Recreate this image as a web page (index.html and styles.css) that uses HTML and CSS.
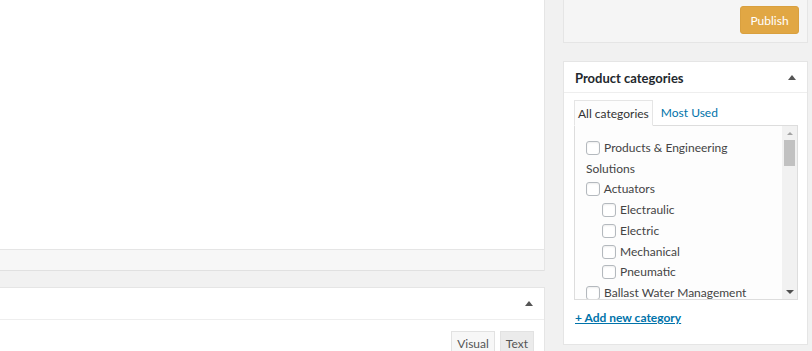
FILE: index.html
```html
<!DOCTYPE html>
<html lang="en">
<head>
    <meta charset="UTF-8">
    <meta name="viewport" content="width=device-width, initial-scale=1.0">
    <title>Edit Product</title>
    <link rel="stylesheet" href="styles.css">
</head>
<body>
    <div class="page">
        <div class="main-col">
            <div class="editor">
                <div class="editor-area"></div>
                <div class="status-bar"></div>
            </div>

            <div class="postbox wide-box">
                <div class="postbox-head">
                    <span class="toggle-arrow"></span>
                </div>
                <div class="editor-tabs">
                    <button class="tab-btn">Visual</button>
                    <button class="tab-btn tab-active">Text</button>
                </div>
            </div>
        </div>

        <aside class="side-col">
            <div class="postbox publish-box">
                <div class="publish-actions">
                    <button class="publish-btn">Publish</button>
                </div>
            </div>

            <div class="postbox cat-box">
                <div class="postbox-head">
                    <h2>Product categories</h2>
                    <span class="toggle-arrow"></span>
                </div>
                <div class="inside">
                    <ul class="cat-tabs">
                        <li class="cat-tab current">All categories</li>
                        <li class="cat-tab"><a href="#">Most Used</a></li>
                    </ul>
                    <div class="tabs-panel">
                        <ul class="checklist">
                            <li><label><input type="checkbox" class="cat-check"> Products &amp; Engineering Solutions</label></li>
                            <li>
                                <label><input type="checkbox" class="cat-check"> Actuators</label>
                                <ul class="children">
                                    <li><label><input type="checkbox" class="cat-check"> Electraulic</label></li>
                                    <li><label><input type="checkbox" class="cat-check"> Electric</label></li>
                                    <li><label><input type="checkbox" class="cat-check"> Mechanical</label></li>
                                    <li><label><input type="checkbox" class="cat-check"> Pneumatic</label></li>
                                </ul>
                            </li>
                            <li><label><input type="checkbox" class="cat-check"> Ballast Water Management</label></li>
                        </ul>
                        <div class="scrollbar">
                            <div class="sb-btn"><span class="sb-up"></span></div>
                            <div class="sb-thumb"></div>
                            <div class="sb-track"></div>
                            <div class="sb-btn"><span class="sb-down"></span></div>
                        </div>
                    </div>
                    <a href="#" class="add-link">+ Add new category</a>
                </div>
            </div>
        </aside>
    </div>
</body>
</html>
```

FILE: styles.css
```css
body {
    font-family: Lato, "Liberation Sans", sans-serif;
    font-size: 12px;
    margin: 0;
    padding: 0;
    background-color: #f1f1f1;
    color: #444;
    overflow: hidden;
}
.page {
    display: grid;
    grid-template-columns: 545px 245px;
    column-gap: 18px;
    height: 351px;
    overflow: hidden;
}
.postbox {
    background-color: #fff;
    border: 1px solid #e5e5e5;
    box-sizing: border-box;
}
.postbox-head {
    display: flex;
    align-items: center;
    justify-content: space-between;
    height: 31px;
    border-bottom: 1px solid #eee;
    box-sizing: content-box;
}
.toggle-arrow {
    width: 0;
    height: 0;
    border-left: 4px solid transparent;
    border-right: 4px solid transparent;
    border-bottom: 5px solid #555;
}

/* left column */
.editor {
    border-right: 1px solid #e5e5e5;
}
.editor-area {
    height: 249px;
    background-color: #fff;
}
.status-bar {
    height: 22px;
    box-sizing: border-box;
    background-color: #f7f7f7;
    border-top: 1px solid #e5e5e5;
    border-bottom: 1px solid #e0e0e0;
}
.wide-box {
    margin-top: 16px;
    border-left: none;
    height: 80px;
}
.wide-box .postbox-head {
    justify-content: flex-end;
    padding-right: 11px;
}
.editor-tabs {
    display: flex;
    justify-content: flex-end;
    gap: 5px;
    padding: 11px 10px 0 0;
}
.tab-btn {
    font-family: inherit;
    font-size: 12px;
    color: #555;
    height: 24px;
    padding: 0 5px;
    background-color: #f7f7f7;
    border: 1px solid #e2e2e2;
    border-bottom: none;
    cursor: pointer;
}
.tab-active {
    background-color: #ebebeb;
}

/* right column */
.publish-box {
    border-top: none;
}
.publish-actions {
    display: flex;
    justify-content: flex-end;
    padding: 6px 8px 8px;
    background-color: #f5f5f5;
}
.publish-btn {
    font-family: inherit;
    font-size: 12px;
    color: #fff;
    height: 28px;
    width: 59px;
    background-color: #e1a744;
    border: 1px solid #d9a03f;
    border-radius: 3px;
    cursor: pointer;
}
.cat-box {
    margin-top: 18px;
    height: 284px;
}
.cat-box .postbox-head {
    height: 30px;
    padding: 0 11px 0 11px;
}
.cat-box h2 {
    margin: 2px 0 0;
    font-size: 13px;
    font-weight: 700;
    color: #23282d;
}
.inside {
    padding: 7px 9px 0 10px;
}
.cat-tabs {
    display: flex;
    list-style: none;
    margin: 0 0 -1px;
    padding: 0;
    position: relative;
}
.cat-tab {
    height: 24px;
    line-height: 25px;
    padding: 0 8px;
}
.cat-tab.current {
    padding: 0 3px;
    background-color: #fdfdfd;
    border: 1px solid #e5e5e5;
    border-bottom: 1px solid #fdfdfd;
    color: #333;
}
.cat-tab a {
    color: #0073aa;
    text-decoration: none;
}
.tabs-panel {
    display: flex;
    height: 175px;
    box-sizing: border-box;
    border: 1px solid #ddd;
    background-color: #fdfdfd;
}
.checklist {
    flex: 1;
    list-style: none;
    margin: 0;
    padding: 12px 12px 0 11px;
    overflow: hidden;
    line-height: 20.7px;
}
.checklist ul {
    list-style: none;
    margin: 0;
    padding: 0;
}
.checklist .children {
    padding-left: 16px;
}
.cat-check {
    appearance: none;
    width: 14px;
    height: 14px;
    margin: 0 1px 0 0;
    vertical-align: -3px;
    background-color: #fff;
    border: 1px solid #b4b9be;
    border-radius: 3px;
    box-shadow: inset 0 1px 2px rgba(0, 0, 0, 0.07);
}
.scrollbar {
    width: 15px;
    display: flex;
    flex-direction: column;
    background-color: #f1f1f1;
}
.sb-btn {
    height: 14px;
    display: flex;
    align-items: center;
    justify-content: center;
}
.sb-up {
    border-left: 3px solid transparent;
    border-right: 3px solid transparent;
    border-bottom: 3px solid #a3a3a3;
}
.sb-down {
    border-left: 4px solid transparent;
    border-right: 4px solid transparent;
    border-top: 4px solid #505050;
}
.sb-thumb {
    height: 26px;
    margin: 0 2px;
    background-color: #c1c1c1;
}
.sb-track {
    flex: 1;
}
.add-link {
    display: inline-block;
    margin: 10px 0 0 1px;
    line-height: 16px;
    color: #0073aa;
    font-weight: 700;
    text-decoration: underline;
}
```
